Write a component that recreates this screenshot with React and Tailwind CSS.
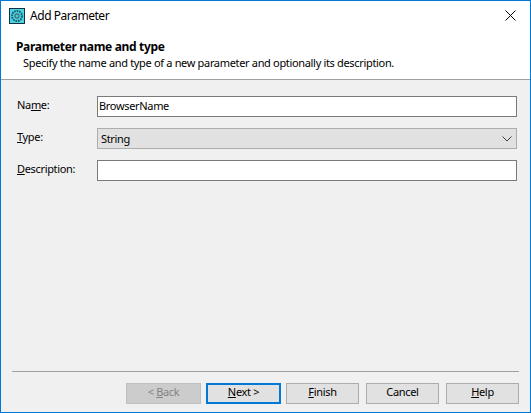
const font = { fontFamily: '"Noto Sans", Roboto, sans-serif' };

const Btn = ({ children, className = "border border-[#adadad] bg-[#e1e1e1] text-[#000]" }) => (
  <div className={`h-[21px] pb-[3px] flex items-center justify-center ${className}`}>
    {children}
  </div>
);

const AppIcon = () => (
  <svg width="16" height="16" viewBox="0 0 16 16" className="shrink-0">
    <rect x="0.5" y="0.5" width="15" height="15" fill="#4fd4e4" stroke="#10323f" />
    <circle cx="8" cy="8" r="5" fill="none" stroke="#1d6273" strokeWidth="2" strokeDasharray="1.8 0.7" />
    <circle cx="8" cy="8" r="2.2" fill="#5cc3d2" stroke="#1d5262" strokeWidth="1" />
  </svg>
);

const Row = ({ label, children }) => (
  <div className="flex items-center h-[21px]">
    <div className="w-[80px] pb-[4px] text-[#000]">{label}</div>
    {children}
  </div>
);

export default function App() {
  return (
    <div className="w-[531px] h-[413px] bg-white border border-[#0078d7] flex flex-col text-[11px] leading-[16px] tracking-[-0.33px] overflow-hidden" style={font}>
      <div className="h-[29px] flex items-center pl-[8px] pr-[14px] shrink-0">
        <AppIcon />
        <span className="ml-[5px] text-[#000] text-[12px] tracking-[-0.45px]">Add Parameter</span>
        <svg width="11" height="11" viewBox="0 0 11 11" className="ml-auto">
          <path d="M0.5 0.5L10.5 10.5M10.5 0.5L0.5 10.5" stroke="#000" strokeWidth="1" fill="none" />
        </svg>
      </div>
      <div className="h-[49px] shrink-0 pl-[15px] pt-[9px]">
        <div className="font-bold text-[12px] text-[#000] tracking-[-0.33px]">Parameter name and type</div>
        <div className="pl-[7px] text-[#000]">Specify the name and type of a new parameter and optionally its description.</div>
      </div>
      <div className="flex-1 flex flex-col bg-[#f0f0f0] border-t border-[#a0a0a0]">
        <div className="flex flex-col gap-[11px] pt-[16px] pl-[16px] pr-[13px]">
          <Row label={<>Na<span className="underline">m</span>e:</>}>
            <div className="flex-1 h-[21px] pb-[2px] bg-white border border-[#7a7a7a] flex items-center pl-[1px] text-[#000]">BrowserName</div>
          </Row>
          <Row label={<><span className="underline">T</span>ype:</>}>
            <div className="flex-1 h-[21px] bg-[#e1e1e1] border border-[#adadad] flex items-center pl-[3px] pr-[4px] text-[#000]">
              String
              <svg width="10" height="6" viewBox="0 0 10 6" className="ml-auto">
                <path d="M0.5 0.5L5 5L9.5 0.5" stroke="#404040" strokeWidth="1" fill="none" />
              </svg>
            </div>
          </Row>
          <Row label={<><span className="underline">D</span>escription:</>}>
            <div className="flex-1 h-[21px] bg-white border border-[#7a7a7a]" />
          </Row>
        </div>
        <div className="mt-auto mx-[11px] border-t border-[#a0a0a0]" />
        <div className="flex justify-end gap-[5px] pr-[11px] pt-[11px] pb-[8px]">
          <div className="w-[75px]">
            <Btn className="border border-[#bfbfbf] bg-[#cccccc] text-[#838383]">
              <span>&lt; <span className="underline">B</span>ack</span>
            </Btn>
          </div>
          <div className="w-[75px]">
            <Btn className="border-2 border-[#0078d7] bg-[#e1e1e1] text-[#000]"><span><span className="underline">N</span>ext &gt;</span></Btn>
          </div>
          <div className="w-[73px]">
            <Btn><span><span className="underline">F</span>inish</span></Btn>
          </div>
          <div className="w-[73px] ml-[2px]">
            <Btn>Cancel</Btn>
          </div>
          <div className="w-[73px] ml-[2px]">
            <Btn><span><span className="underline">H</span>elp</span></Btn>
          </div>
        </div>
      </div>
    </div>
  );
}
